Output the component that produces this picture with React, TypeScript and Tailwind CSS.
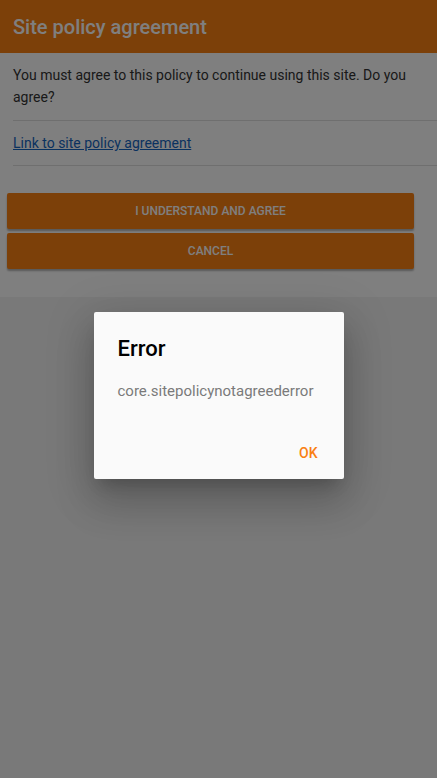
export default function App() {
  return (
    <div className="relative flex h-[778px] w-full flex-col overflow-hidden bg-[#f2f2f2] font-['Roboto','Liberation_Sans',sans-serif]">
      <header className="flex h-[53px] items-center bg-[#f98012] px-[13px] shadow-[0_2px_4px_rgba(0,0,0,0.25)]">
        <h1 className="text-[20px] font-medium text-white">Site policy agreement</h1>
      </header>

      <main className="bg-white pb-[28px]">
        <div className="pl-[13px]">
          <p className="border-b border-[#dedede] pt-[11px] pr-[16px] pb-[12px] text-[14px] leading-[22px] text-[#333]">
            You must agree to this policy to continue using this site. Do you agree?
          </p>
          <div className="border-b border-[#dedede] py-[11px] text-[14px] leading-[22px]">
            <a href="#" className="text-[#1565c0] underline">
              Link to site policy agreement
            </a>
          </div>
        </div>

        <div className="mt-[27px] ml-[7px] mr-[23px] flex flex-col gap-[4px]">
          <button className="h-[36px] rounded-[2px] bg-[#f98012] text-[12px] font-medium text-white uppercase shadow-[0_2px_2px_rgba(0,0,0,0.3)]">
            I understand and agree
          </button>
          <button className="h-[36px] rounded-[2px] bg-[#f98012] text-[12px] font-medium text-white uppercase shadow-[0_2px_2px_rgba(0,0,0,0.3)]">
            Cancel
          </button>
        </div>
      </main>

      <div className="flex-1" />

      <div className="absolute inset-0 flex items-center justify-center bg-black/50 pt-[13px]">
        <div className="w-[250px] rounded-[2px] bg-[#fafafa] shadow-[0_11px_15px_-7px_rgba(0,0,0,0.2),0_24px_38px_3px_rgba(0,0,0,0.14),0_9px_46px_8px_rgba(0,0,0,0.12)]">
          <div className="px-[24px] pt-[23px] pb-[17px]">
            <h2 className="text-[22px] leading-[28px] font-medium text-black">Error</h2>
          </div>
          <div className="px-[24px] text-[15px] leading-[22px] text-[#7a7a7a]">core.sitepolicynotagreederror</div>
          <div className="flex justify-end px-[16px] pt-[33px] pb-[8px]">
            <button className="h-[36px] px-[10px] text-[14px] font-medium text-[#f98012] uppercase">OK</button>
          </div>
        </div>
      </div>
    </div>
  )
}
